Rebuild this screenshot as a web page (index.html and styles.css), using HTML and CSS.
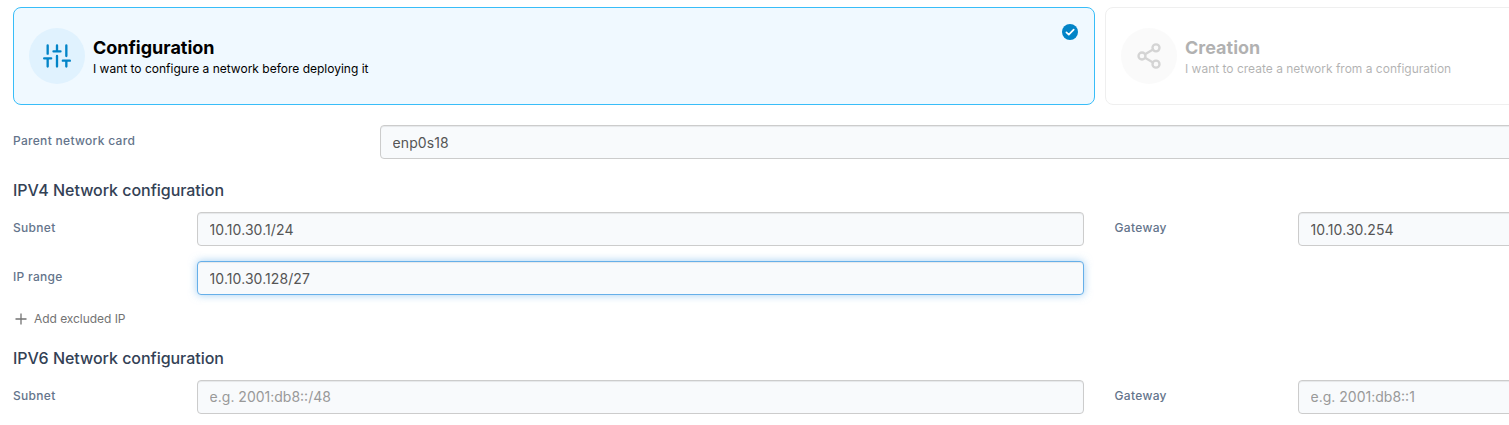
FILE: index.html
```html
<!DOCTYPE html>
<html lang="en">
<head>
<meta charset="utf-8">
<title>Network configuration</title>
<link rel="stylesheet" href="styles.css">
</head>
<body>
<main class="page">
  <section class="cards">
    <div class="card card-active">
      <span class="card-icon">
        <svg width="28" height="28" viewBox="0 0 24 24" fill="none" stroke="currentColor" stroke-width="2" stroke-linecap="round" stroke-linejoin="round"><path d="M4 21v-7M4 10V3M12 21v-9M12 8V3M20 21v-5M20 12V3M1 14h6M9 8h6M17 16h6"/></svg>
      </span>
      <div class="card-text">
        <h2 class="card-title">Configuration</h2>
        <p class="card-desc">I want to configure a network before deploying it</p>
      </div>
      <svg class="card-check" width="16" height="16" viewBox="0 0 16 16"><circle cx="8" cy="8" r="8" fill="#0284c7"/><path d="M4.4 8.4l2.4 2.3 4.9-5.1" fill="none" stroke="#fff" stroke-width="1.7" stroke-linecap="round" stroke-linejoin="round"/></svg>
    </div>
    <div class="card card-muted">
      <span class="card-icon">
        <svg width="28" height="28" viewBox="0 0 24 24" fill="none" stroke="currentColor" stroke-width="2" stroke-linecap="round" stroke-linejoin="round"><circle cx="18" cy="5" r="3"/><circle cx="6" cy="12" r="3"/><circle cx="18" cy="19" r="3"/><path d="M8.59 13.51l6.83 3.98M15.41 6.51l-6.82 3.98"/></svg>
      </span>
      <div class="card-text">
        <h2 class="card-title">Creation</h2>
        <p class="card-desc">I want to create a network from a configuration</p>
      </div>
    </div>
  </section>

  <div class="row row-parent">
    <label class="label" for="parent">Parent network card</label>
    <input class="input" id="parent" value="enp0s18">
  </div>

  <h3 class="heading">IPV4 Network configuration</h3>
  <div class="row">
    <label class="label" for="subnet4">Subnet</label>
    <input class="input" id="subnet4" value="10.10.30.1/24">
    <label class="label label-second" for="gateway4">Gateway</label>
    <input class="input" id="gateway4" value="10.10.30.254">
  </div>
  <div class="row">
    <label class="label" for="range">IP range</label>
    <input class="input input-focus" id="range" value="10.10.30.128/27">
  </div>
  <button class="add" type="button">
    <svg width="12" height="12" viewBox="0 0 12 12" fill="none" stroke="currentColor" stroke-width="1.3"><path d="M6 .5v11M.5 6h11"/></svg>
    Add excluded IP
  </button>

  <h3 class="heading">IPV6 Network configuration</h3>
  <div class="row">
    <label class="label" for="subnet6">Subnet</label>
    <input class="input" id="subnet6" placeholder="e.g. 2001:db8::/48">
    <label class="label label-second" for="gateway6">Gateway</label>
    <input class="input" id="gateway6" placeholder="e.g. 2001:db8::1">
  </div>
</main>
</body>
</html>
```
FILE: styles.css
```css
* { box-sizing: border-box; }
html { overflow: hidden; }
body {
  margin: 0;
  height: 425px;
  overflow: hidden;
  background: #fff;
  font-family: Inter, "Liberation Sans", sans-serif;
}
.page { width: 2187px; padding: 7px 0 0 13px; }
.cards { display: grid; grid-template-columns: 1082px 1082px; gap: 10px; }
.card {
  position: relative;
  display: flex;
  align-items: center;
  gap: 8px;
  height: 98px;
  padding: 0 15px;
  border: 1px solid #ccc;
  border-radius: 8px;
}
.card-active { border-color: #38bdf8; background: #f0f9ff; }
.card-muted { opacity: .3; }
.card-icon {
  display: flex;
  align-items: center;
  justify-content: center;
  width: 56px;
  height: 56px;
  border-radius: 50%;
  background: #e0f2fe;
  color: #0284c7;
}
.card-muted .card-icon { background: #f0f0f0; color: #737373; }
.card-text { padding-top: 2px; }
.card-title { margin: 0; font-size: 18px; line-height: 24px; font-weight: 700; color: #000; }
.card-desc { margin: 0; font-size: 12px; line-height: 18px; color: #000; }
.card-check { position: absolute; top: 16px; right: 16px; }

.row {
  display: grid;
  grid-template-columns: 184px 887px 30.6px 183.4px 887px;
  height: 34px;
  margin-bottom: 15px;
}
.row-parent { grid-template-columns: 367px 1805px; margin-top: 20px; }
.label { padding-top: 7px; font-size: 12px; line-height: 18px; font-weight: 500; letter-spacing: .025em; color: #64748b; }
.label-second { grid-column: 4; }
.input {
  width: 100%;
  height: 34px;
  padding: 6px 12px 6px 11.6px;
  border: 1px solid #ccc;
  border-radius: 4px;
  outline: 0;
  background: #f8fafc;
  box-shadow: inset 0 1px 1px rgba(0, 0, 0, .075);
  font: 14px/20px Inter, "Liberation Sans", sans-serif;
  letter-spacing: .08px;
  color: #555;
}
.input:placeholder-shown { padding-top: 5px; padding-bottom: 7px; }
.input::placeholder { letter-spacing: 0; color: #999; opacity: 1; }
.input-focus {
  border-color: #66afe9;
  box-shadow: inset 0 1px 1px rgba(0, 0, 0, .075), 0 0 8px rgba(102, 175, 233, .6);
}
.heading { margin: 0 0 10px; padding-top: 4px; font-size: 16px; line-height: 24px; font-weight: 500; letter-spacing: -.035px; color: #334155; }
.add {
  display: flex;
  align-items: center;
  gap: 7px;
  height: 18px;
  margin: 0 0 14px;
  padding: 0 0 0 2px;
  border: 0;
  background: none;
  font: 12px/18px Inter, "Liberation Sans", sans-serif;
  letter-spacing: -.05px;
  color: #737373;
}
```
